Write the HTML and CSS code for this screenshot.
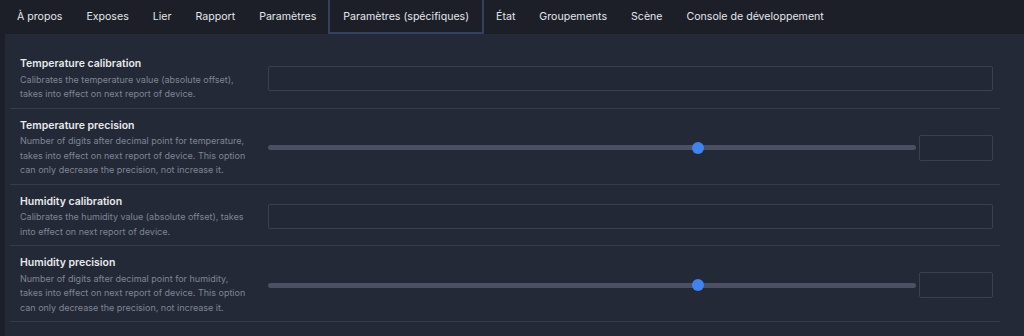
FILE: index.html
```html
<!DOCTYPE html>
<html lang="fr">
<head>
<meta charset="utf-8">
<link rel="stylesheet" href="styles.css">
</head>
<body>
<nav class="tabs">
  <a class="tab">À propos</a>
  <a class="tab">Exposes</a>
  <a class="tab">Lier</a>
  <a class="tab">Rapport</a>
  <a class="tab">Paramètres</a>
  <a class="tab active">Paramètres (spécifiques)</a>
  <a class="tab">État</a>
  <a class="tab">Groupements</a>
  <a class="tab">Scène</a>
  <a class="tab">Console de développement</a>
</nav>
<main class="panel">
  <div class="row">
    <div class="label">
      <div class="title">Temperature calibration</div>
      <div class="desc">Calibrates the temperature value (absolute offset), takes into effect on next report of device.</div>
    </div>
    <div class="control"><div class="text-input"></div></div>
  </div>
  <div class="row">
    <div class="label">
      <div class="title">Temperature precision</div>
      <div class="desc">Number of digits after decimal point for temperature, takes into effect on next report of device. This option can only decrease the precision, not increase it.</div>
    </div>
    <div class="control">
      <div class="slider"><div class="track"></div><div class="thumb"></div></div>
      <div class="num-input"></div>
    </div>
  </div>
  <div class="row">
    <div class="label">
      <div class="title">Humidity calibration</div>
      <div class="desc">Calibrates the humidity value (absolute offset), takes into effect on next report of device.</div>
    </div>
    <div class="control"><div class="text-input"></div></div>
  </div>
  <div class="row">
    <div class="label">
      <div class="title">Humidity precision</div>
      <div class="desc">Number of digits after decimal point for humidity, takes into effect on next report of device. This option can only decrease the precision, not increase it.</div>
    </div>
    <div class="control">
      <div class="slider"><div class="track"></div><div class="thumb"></div></div>
      <div class="num-input"></div>
    </div>
  </div>
</main>
</body>
</html>
```
FILE: styles.css
```css
* { box-sizing: border-box; }
html, body {
  margin: 0;
  height: 100%;
  background: #1c1f28;
  font-family: Inter, "Noto Sans", "Liberation Sans", sans-serif;
  overflow: hidden;
}
.tabs {
  display: flex;
  height: 34px;
  padding-left: 5px;
}
.tab {
  display: flex;
  align-items: center;
  padding: 0 11px 1px;
  border: 1px solid transparent;
  border-top: 0;
  font-size: 10.6px;
  color: #e4e6eb;
  white-space: nowrap;
}
.tab.active {
  border-color: #34405c;
  border-width: 0 2px 2px 2px;
  padding: 0 13px;
}
.panel {
  margin-left: 5px;
  background: #242937;
  height: 302px;
  padding: 13px 24px 0 5px;
}
.row {
  display: grid;
  grid-template-columns: 248px 1fr;
  align-items: center;
  padding: 9px 7px 6px 10px;
  border-bottom: 1.5px solid #363c4c;
}
.title {
  font-size: 10.5px;
  font-weight: 600;
  line-height: 15px;
  margin-bottom: 1.5px;
  color: #e8e9ed;
}
.desc {
  font-size: 9px;
  line-height: 14.5px;
  color: #7f8594;
  max-width: 230px;
}
.control {
  display: flex;
  align-items: center;
  gap: 3px;
}
.text-input {
  flex: 1;
  height: 25px;
  border: 1.5px solid #3a4051;
  border-radius: 2px;
  background: #232836;
}
.slider {
  flex: 1;
  position: relative;
  height: 12px;
  display: flex;
  align-items: center;
}
.track {
  width: 100%;
  height: 5px;
  border-radius: 3px;
  background: #4b5162;
}
.thumb {
  position: absolute;
  left: 66.4%;
  top: 0;
  width: 12px;
  height: 12px;
  margin-left: -6px;
  border-radius: 50%;
  background: #3f83ee;
}
.num-input {
  width: 74px;
  height: 26px;
  border: 1.5px solid #3a4051;
  border-radius: 2px;
  background: #232836;
}
```
